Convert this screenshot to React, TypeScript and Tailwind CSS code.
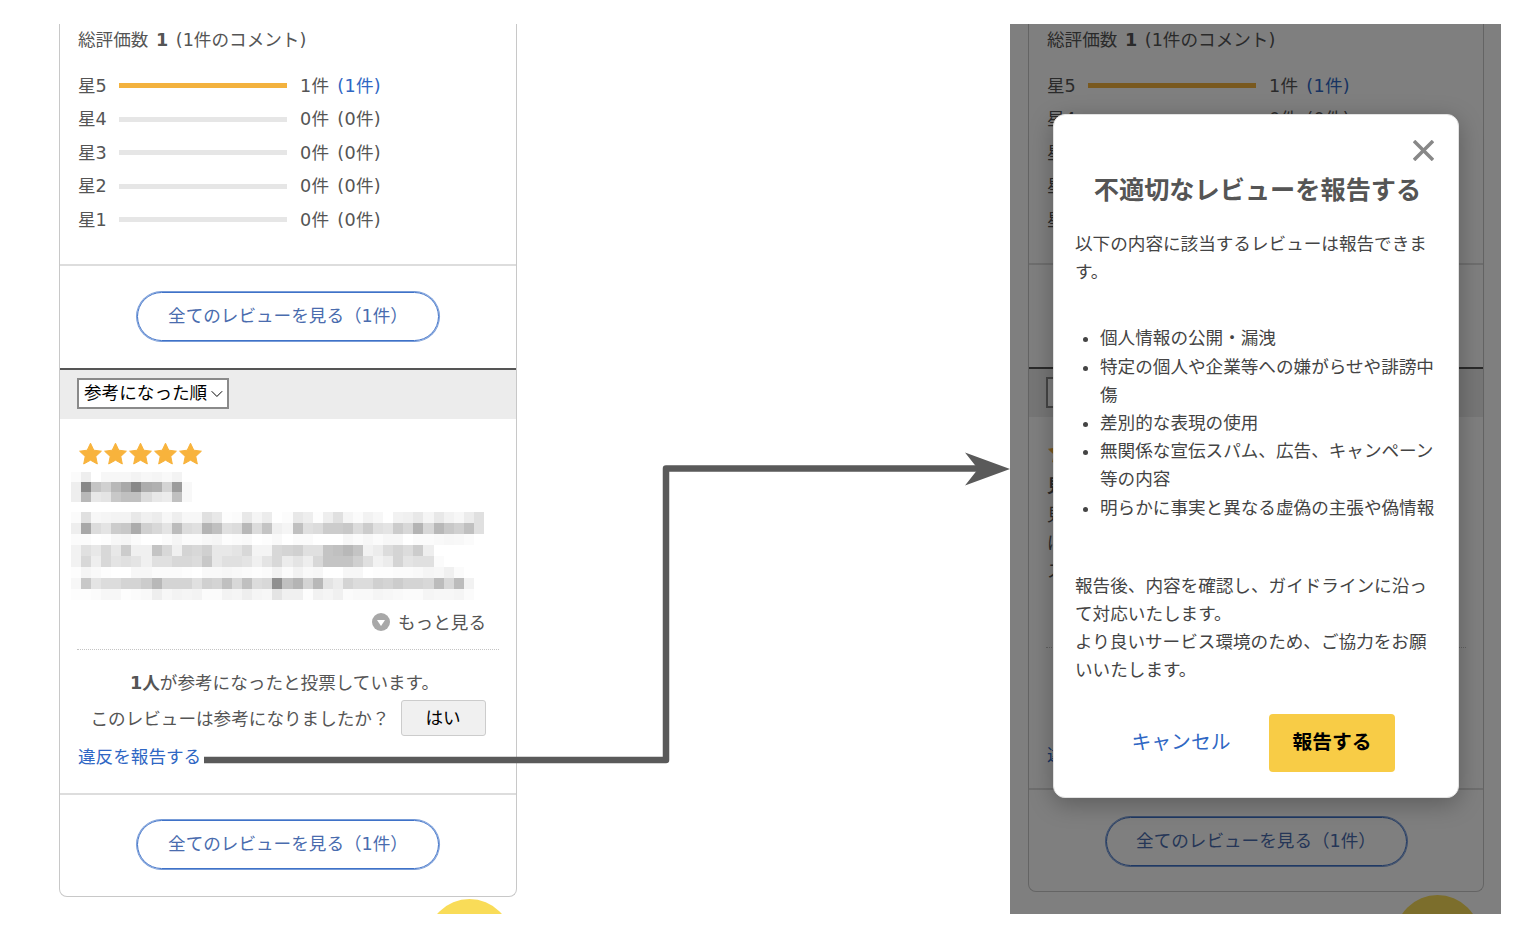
import { ChevronDown } from 'lucide-react';

const NAME_ROWS = [
  'fb ee ff f7 f7 f7 f3 f7 f5 f9 f3',
  'ee 88 c4 d0 b8 a8 88 ac b0 d4 9c f8',
  'ee b8 e8 e4 c8 c0 c0 dc e8 ec c0 f8',
];

const BODY_ROWS = [
  'fb e0 f7 f5 f3 f3 e8 f0 ec f7 ee f7 f7 e0 e8 fd fb e8 f5 ec ff fc e8 ee fd ee e0 f5 fb f2 f7 ff f2 f0 e8 f5 e8 f2 f7 ec e0',
  'ee a8 dc e4 cc c8 ac d0 d8 e4 bc dc e0 b4 c0 e0 dc b8 dc c4 f0 f5 c0 e0 dc cc cc c8 dc cc e0 e4 cc d8 b4 d8 b8 c8 d0 c0 e0',
  'fb fb ff fd f7 f5 fb ff ff fb f5 fb fb f7 f5 fd fb f9 ff fd f9 ff fb fb ff ff ff f7 fb f7 fb f7 f7 ff fb fb f9 f7 f8 fb',
  'f2 e0 e8 d8 e8 cc f0 f0 c4 d8 f0 d4 d8 d0 e8 e8 e4 d8 f4 f4 d8 d4 d0 e0 e0 c4 c0 b8 c4 f2 ec dc d4 dc cc ee',
  'f2 d8 ee d8 e4 e0 e4 f0 e0 e0 d8 d8 dc c8 e8 e0 e0 e4 f0 e4 d8 ec e4 ee d8 c4 c4 c4 d0 e0 f2 ec d4 e4 e0 e0 fb',
  'fd f5 f9 fd ff ff f7 f7 fb fb fb fd ff f9 f9 f7 f9 fb fd fb f2 fb f2 f9 f7 ff ff f7 f7 ff fd fd fb fb f9 f5 f7 f0 fb',
  'f7 c8 e4 dc dc d4 d4 cc b8 d4 d4 d4 e0 d0 d4 c0 d8 c0 dc d8 90 c0 b4 d4 b8 e4 ec d4 dc dc d0 d4 cc d4 d4 d8 bc d8 bc f2',
  'fd fd fb f7 f7 fd fb f9 ee f7 f3 f5 f3 fb fb f3 f5 ee f5 f7 e4 f0 f0 fd f2 f5 f0 fb f9 f9 f5 f7 f9 fb fb f5 f7 f7 f5 fb',
];

const RATINGS = [
  { label: '星5', count: 1 },
  { label: '星4', count: 0 },
  { label: '星3', count: 0 },
  { label: '星2', count: 0 },
  { label: '星1', count: 0 },
];

const REPORT_REASONS = [
  '個人情報の公開・漏洩',
  '特定の個人や企業等への嫌がらせや誹謗中傷',
  '差別的な表現の使用',
  '無関係な宣伝スパム、広告、キャンペーン等の内容',
  '明らかに事実と異なる虚偽の主張や偽情報',
];

const Mosaic = ({ rows, cellHeight, width }: { rows: string[]; cellHeight: number; width: number }) => (
  <svg width={width} height={rows.length * cellHeight} shapeRendering="crispEdges" className="block">
    {rows.map((row, y) =>
      row.split(' ').map((shade, x) => (
        <rect key={`${y}-${x}`} x={x * 10.07} y={y * cellHeight} width={10.2} height={cellHeight} fill={`#${shade}${shade}${shade}`} />
      ))
    )}
  </svg>
);

const Star = () => (
  <svg width="25" height="24" viewBox="0 0 25 24" className="block">
    <path
      d="M12.5 1.2l3.3 7 7.6 1-5.6 5.2 1.5 7.6-6.8-3.8-6.8 3.8 1.5-7.6-5.6-5.2 7.6-1z"
      fill="#f8b33c"
      stroke="#f8b33c"
      strokeLinejoin="round"
    />
  </svg>
);

const AllReviewsButton = ({ compact }: { compact?: boolean }) => (
  <button
    className={`flex h-[49px] items-center justify-center rounded-full border border-[#3f72c8] pt-[1px] text-[#4a6cae] ring-1 ring-[#3f72c8]/70 ${
      compact ? 'w-[301px]' : 'w-[302px]'
    }`}
  >
    全てのレビューを見る（1件）
  </button>
);

// same card twice: the right one sits behind the modal and is a few px tighter
const ReviewCard = ({ compact }: { compact?: boolean }) => (
  <div className="rounded-b-lg border-x border-b border-[#c8c8c8]">
    <div className={`border-b-2 border-[#dddddd] pl-[18px] ${compact ? 'pb-[26px]' : 'pb-[27px]'}`}>
      <div className="h-[30px] leading-[32px]">
        総評価数 <b>1</b> (1件のコメント)
      </div>
      <div className="mt-[15px]">
        {RATINGS.map((r) => (
          <div key={r.label} className="flex h-[33.5px] items-center">
            <span className="w-[41px] leading-[26px]">{r.label}</span>
            <div className={`h-[5px] w-[168px] ${r.count ? 'bg-[#f3b23e]' : 'bg-[#e6e6e6]'}`} />
            <span className="ml-[13px] leading-[26px] tracking-[0.3px]">
              {r.count}件 <span className={r.count ? 'text-[#2f67c4]' : ''}>({r.count}件)</span>
            </span>
          </div>
        ))}
      </div>
    </div>

    <div className="flex justify-center pb-[27px] pt-[26px]">
      <AllReviewsButton compact={compact} />
    </div>

    <div className={`border-t-2 border-[#555555] bg-[#ececec] pl-[17px] pt-[8px] ${compact ? 'h-[50px]' : 'h-[51px]'}`}>
      <div className="flex h-[31px] w-[152px] items-center border-2 border-[#8a8a8a] bg-white pl-[5px] pt-[1px] text-black">
        <span className="whitespace-nowrap">参考になった順</span>
        <ChevronDown size={20} strokeWidth={1.2} />
      </div>
    </div>

    <div className="pt-[23px]">
      <div className="flex pl-[18px]">
        <Star />
        <Star />
        <Star />
        <Star />
        <Star />
      </div>
      {compact ? (
        <div className="mt-[7px] h-[127px] pl-[18px] leading-[28px]">
          <div className="h-[30px] font-bold leading-[30px]">見</div>
          <div>見</div>
          <div>は</div>
          <div>ス</div>
        </div>
      ) : (
        <div className="mt-[6px] pl-[11px]">
          <Mosaic rows={NAME_ROWS} cellHeight={10} width={130} />
          <div className="mt-[10px]">
            <Mosaic rows={BODY_ROWS} cellHeight={11} width={414} />
          </div>
        </div>
      )}
      <div className="mt-[10px] flex items-center justify-end pr-[30px]">
        <svg width="18" height="18" viewBox="0 0 18 18" className="mr-[8px]">
          <circle cx="9" cy="9" r="9" fill="#a8a8a8" />
          <path d="M5 7h8l-4 6z" fill="#fff" />
        </svg>
        <span className="pt-[2px] leading-[22px]">もっと見る</span>
      </div>
      <div className="mx-[17px] mt-[15px] border-t border-dotted border-[#c4c4c4]" />
      <div className="mt-[21px] pr-[7px] text-center leading-[24px]">
        <b>1人</b>が参考になったと投票しています。
      </div>
      <div className="mt-[5px] flex items-center justify-center">
        <span className="pt-[3px]">このレビューは参考になりましたか？</span>
        <button className="ml-[11px] h-[36px] w-[85px] rounded-[3px] border border-[#cccccc] bg-[#f0f0f0] pt-[2px] text-black">
          はい
        </button>
      </div>
      <div className={`mt-[9px] pl-[18px] leading-[24px] text-[#2f67c4] ${compact ? 'pb-[21px]' : 'pb-[24px]'}`}>
        違反を報告する
      </div>
    </div>

    <div className={`flex justify-center border-t-2 border-[#dddddd] ${compact ? 'pb-[25px] pt-[27px]' : 'pb-[27px] pt-[25px]'}`}>
      <AllReviewsButton compact={compact} />
    </div>
  </div>
);

const ReportModal = () => (
  <div className="absolute left-[43px] top-[90px] h-[684px] w-[406px] rounded-xl border border-[#e2e2e2] bg-white pl-[21px] pr-[18px] text-[#444444] shadow-[0_6px_24px_rgba(0,0,0,0.28)]">
    <div className="flex justify-end pr-[6px] pt-[25px]">
      <svg width="21" height="21" viewBox="0 0 21 21" className="block">
        <path d="M1 1l19 19M20 1L1 20" stroke="#888888" strokeWidth="3.5" fill="none" />
      </svg>
    </div>
    <h3 className="mt-[13px] h-[34px] whitespace-nowrap text-center text-[25.2px] font-bold leading-[34px] text-[#555555]">
      不適切なレビューを報告する
    </h3>
    <p className="mt-[22px] leading-[28.2px]">以下の内容に該当するレビューは報告できます。</p>
    <ul className="mt-[38px] list-disc pl-[25px] leading-[28.2px]">
      {REPORT_REASONS.map((reason) => (
        <li key={reason}>{reason}</li>
      ))}
    </ul>
    <p className="mt-[50px] leading-[28.2px]">
      報告後、内容を確認し、ガイドラインに沿って対応いたします。
      <br />
      より良いサービス環境のため、ご協力をお願いいたします。
    </p>
    <div className="mt-[29px] flex justify-end gap-[25px] pr-[45px]">
      <button className="h-[58px] w-[126px] pt-[1px] text-[19.8px] text-[#2f67c4]">キャンセル</button>
      <button className="h-[58px] w-[126px] rounded bg-[#f8cc46] pt-[1px] text-[19.8px] font-bold text-black">報告する</button>
    </div>
  </div>
);

export default function App() {
  return (
    <div className="relative h-[934px] w-[1534px] overflow-hidden bg-white font-['DejaVu_Sans','Noto_Sans_CJK_JP',sans-serif] text-[17.6px] text-[#555555] [word-spacing:2px]">
      <div className="flex gap-[493px] pl-[59px] pt-[24px]">
        {/* before */}
        <div className="relative h-[890px] w-[458px] overflow-hidden">
          <ReviewCard />
          <div className="absolute left-[368px] top-[875px] h-[85px] w-[85px] rounded-full bg-[#f9dc58]" />
        </div>

        {/* after: report modal open */}
        <div className="relative h-[890px] w-[491px] overflow-hidden bg-white pl-[18px] pr-[17px]">
          <ReviewCard compact />
          <div className="absolute left-[385px] top-[871px] h-[85px] w-[85px] rounded-full bg-[#f9dc58]" />
          <div className="absolute inset-0 bg-black/50" />
          <ReportModal />
        </div>
      </div>

      {/* arrow between the two shots */}
      <svg width="1534" height="934" className="pointer-events-none absolute left-0 top-0">
        <path d="M204 760H666V468.5H985" fill="none" stroke="#5a5a5a" strokeWidth="6.5" strokeLinejoin="round" />
        <path d="M965 452.5L1010 469L965 485.5L978 469z" fill="#5a5a5a" />
      </svg>
    </div>
  );
}
